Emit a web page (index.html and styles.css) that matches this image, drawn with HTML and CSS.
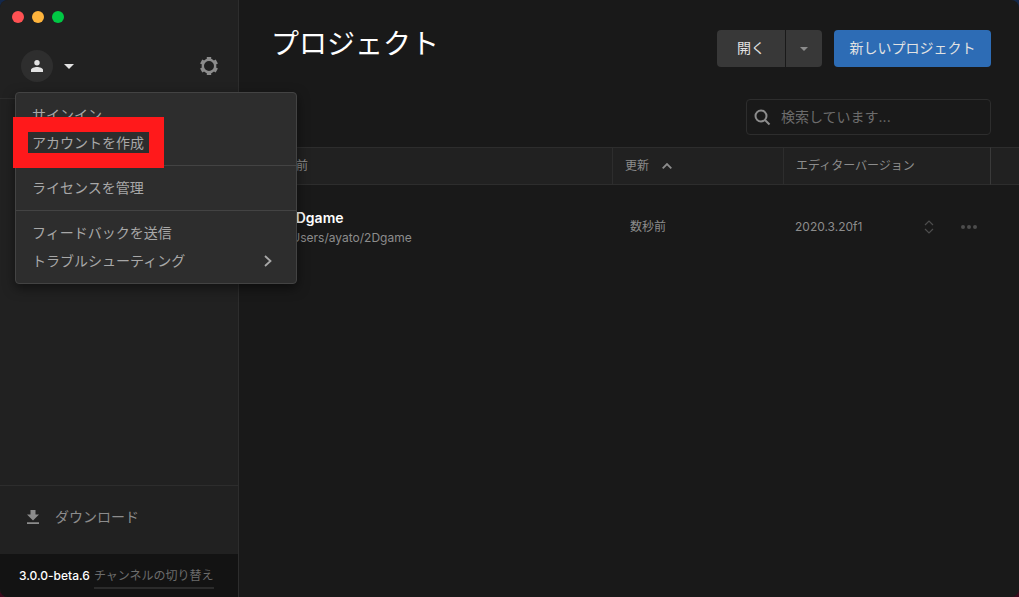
FILE: index.html
```html
<!DOCTYPE html>
<html lang="ja">
<head>
<meta charset="utf-8">
<meta name="viewport" content="width=device-width, initial-scale=1">
<title>プロジェクト</title>
<link rel="stylesheet" href="styles.css">
</head>
<body>
<div class="window">
  <aside class="sidebar">
    <div class="traffic">
      <button class="light red" aria-label="閉じる"></button>
      <button class="light yellow" aria-label="しまう"></button>
      <button class="light green" aria-label="拡大"></button>
    </div>
    <div class="account">
      <button class="user" aria-label="アカウント">
        <span class="avatar">
          <svg width="12" height="12" viewBox="0 0 12 12" fill="currentColor"><circle cx="6" cy="2.7" r="2.7"/><path d="M0 12V10C0 8 3.5 7 6 7s6 1 6 3v2z"/></svg>
        </span>
        <svg width="10" height="5" viewBox="0 0 10 5" fill="currentColor"><path d="M0 0h10L5 5z"/></svg>
      </button>
      <button class="settings" aria-label="設定">
        <svg width="18" height="18" viewBox="0 0 18 18" fill="none" stroke="currentColor"><circle cx="9" cy="9" r="6.200" stroke-width="2.400"/><path stroke-width="4.400" d="M9 0v2.500M9 15.500V18M1.200 4.500l2.200 1.250M14.600 12.250l2.200 1.250M1.200 13.500l2.200-1.250M14.600 5.750l2.200-1.250"/></svg>
      </button>
      <div class="menu" role="menu">
        <div class="group">
          <button class="item" role="menuitem">サインイン</button>
          <div class="marked"><button class="item" role="menuitem">アカウントを作成</button></div>
        </div>
        <div class="group">
          <button class="item" role="menuitem">ライセンスを管理</button>
        </div>
        <div class="group">
          <button class="item" role="menuitem">フィードバックを送信</button>
          <button class="item" role="menuitem">トラブルシューティング
            <svg width="8" height="12" viewBox="0 0 8 12" fill="none" stroke="currentColor" stroke-width="1.800"><path d="M1 1l5.500 5L1 11"/></svg>
          </button>
        </div>
      </div>
    </div>
    <div class="spacer"></div>
    <button class="downloads">
      <svg width="12" height="14" viewBox="0 0 12 14" fill="currentColor"><path d="M3.500 0h5v4.500H12L6 10.500 0 4.500h3.500zM0 12.300h12V14H0z"/></svg>
      ダウンロード
    </button>
    <footer class="version">
      <strong>3.0.0-beta.6</strong>
      <a href="#channel">チャンネルの切り替え</a>
    </footer>
  </aside>
  <main class="main">
    <header class="top">
      <h1>プロジェクト</h1>
      <div class="actions">
        <div class="split">
          <button class="open">開く</button>
          <button class="more" aria-label="開くオプション"><svg width="8" height="4" viewBox="0 0 8 4" fill="currentColor"><path d="M0 0h8L4 4z"/></svg></button>
        </div>
        <button class="create">新しいプロジェクト</button>
      </div>
    </header>
    <div class="search-row">
      <label class="search">
        <svg width="17" height="17" viewBox="0 0 17 17" fill="none" stroke="currentColor" stroke-width="2"><circle cx="7" cy="7" r="5.500"/><path d="M11 11l4.500 4.500"/></svg>
        <input type="text" placeholder="検索しています..." aria-label="検索">
      </label>
    </div>
    <table class="projects">
      <colgroup><col><col class="col-updated"><col class="col-version"><col class="col-end"></colgroup>
      <thead>
        <tr>
          <th class="name">名前</th>
          <th><span class="sort">更新<svg width="10" height="6" viewBox="0 0 10 6" fill="none" stroke="currentColor" stroke-width="1.800"><path d="M.7 5.300L5 1l4.300 4.300"/></svg></span></th>
          <th>エディターバージョン</th>
          <th class="end"></th>
        </tr>
      </thead>
      <tbody>
        <tr>
          <td class="name"><div class="title">2Dgame</div><div class="path">/Users/ayato/2Dgame</div></td>
          <td class="updated">数秒前</td>
          <td colspan="2" class="editor">
            <div class="editor-row">
              <span>2020.3.20f1</span>
              <button aria-label="バージョンを選択"><svg width="10" height="14" viewBox="0 0 10 14" fill="none" stroke="currentColor" stroke-width="1.200"><path d="M1 5l4-4 4 4M1 9l4 4 4-4"/></svg></button>
              <button aria-label="その他"><svg width="16" height="4" viewBox="0 0 16 4" fill="currentColor"><circle cx="2" cy="2" r="2"/><circle cx="8" cy="2" r="2"/><circle cx="14" cy="2" r="2"/></svg></button>
            </div>
          </td>
        </tr>
      </tbody>
    </table>
  </main>
</div>
</body>
</html>
```
FILE: styles.css
```css
*, *::before, *::after { box-sizing: border-box; }
body {
  margin: 0;
  background: linear-gradient(#14284a, #3a0a1c);
  color: #a8a8a8;
  font-family: Inter, "Noto Sans CJK JP", sans-serif;
  font-size: 14px;
  line-height: 20px;
}
button {
  margin: 0;
  padding: 0;
  border: 0;
  background: none;
  color: inherit;
  font: inherit;
}
svg { display: block; flex: none; }

.window {
  display: flex;
  min-height: 100vh;
  border-radius: 8px;
  background: #191919;
  overflow: hidden;
}

.sidebar {
  display: flex;
  flex-direction: column;
  flex: 0 0 239px;
  border-right: 1px solid #2d2d2d;
  background: #212121;
}
.traffic { display: flex; gap: 8px; padding: 11px 12px 0; }
.light { width: 12px; height: 12px; border-radius: 50%; }
.red { background: #ff5153; }
.yellow { background: #ffb43c; }
.green { background: #00c844; }

.account {
  position: relative;
  display: flex;
  align-items: center;
  justify-content: space-between;
  padding: 27px 20px 16px 21px;
  border-bottom: 1px solid #2d2d2d;
}
.user { display: flex; align-items: center; gap: 11px; color: #e2e2e2; }
.avatar {
  display: grid;
  place-items: center;
  width: 32px;
  height: 32px;
  border-radius: 50%;
  background: #2e2e2e;
}
.settings { color: #8c8c8c; }

.menu {
  position: absolute;
  z-index: 2;
  top: 69px;
  left: 15px;
  width: 282px;
  border: 1px solid #434343;
  border-radius: 4px;
  background: #2d2d2d;
  box-shadow: 0 4px 12px rgba(0, 0, 0, .5);
}
.group { padding: 8px 0; }
.group + .group { border-top: 1px solid #434343; }
.item {
  display: flex;
  align-items: center;
  justify-content: space-between;
  width: 100%;
  padding: 4px 24px 4px 16px;
  text-align: left;
}
.marked { position: relative; }
.marked::after {
  content: "";
  position: absolute;
  top: -12px;
  left: -3px;
  width: 151px;
  height: 51px;
  border: 15px solid #ff191b;
}

.spacer { flex: 1; }
.downloads {
  display: flex;
  align-items: center;
  gap: 16px;
  padding: 21px 27px 27px;
  border-top: 1px solid #2d2d2d;
  color: #8c8c8c;
}
.version {
  display: flex;
  align-items: flex-start;
  gap: 4px;
  padding: 10px 0 8px 19px;
  background: #131313;
  font-size: 12px;
  line-height: 24px;
  white-space: nowrap;
}
.version strong { color: #fff; font-weight: 500; }
.version a {
  border-bottom: 2px solid #2b2b2b;
  color: #6c6c6c;
  line-height: 23px;
  text-decoration: none;
}

.main { flex: 1; min-width: 0; }
.top {
  display: flex;
  justify-content: space-between;
  padding: 22px 28px 0 32px;
}
h1 {
  margin: 0;
  color: #fff;
  font-size: 28px;
  font-weight: 400;
  line-height: 44px;
}
.actions { display: flex; gap: 12px; padding-top: 8px; color: #e2e2e2; }
.actions button { height: 37px; padding-bottom: 2px; }
.split { display: flex; gap: 1px; }
.open { width: 68px; border-radius: 4px 0 0 4px; background: #383838; }
.actions .more {
  display: grid;
  place-items: center;
  width: 36px;
  padding: 0;
  border-radius: 0 4px 4px 0;
  background: #383838;
  color: #8c8c8c;
}
.create { width: 157px; border-radius: 4px; background: #2d6cb5; }

.search-row { display: flex; justify-content: flex-end; padding: 32px 28px 12px; }
.search {
  display: flex;
  align-items: center;
  gap: 10px;
  width: 245px;
  height: 36px;
  padding: 0 7px;
  border: 1px solid #2d2d2d;
  border-radius: 4px;
  color: #8c8c8c;
}
.search input {
  flex: 1;
  min-width: 0;
  padding: 0;
  border: 0;
  outline: 0;
  background: none;
  color: #e2e2e2;
  font: inherit;
}
.search input::placeholder { color: #6c6c6c; opacity: 1; }

.projects {
  width: 100%;
  border-collapse: separate;
  border-spacing: 0;
  table-layout: fixed;
  font-size: 12px;
}
.col-updated { width: 171px; }
.col-version { width: 207px; }
.col-end { width: 29px; }
th {
  height: 38px;
  padding: 0 12px;
  border: solid #2d2d2d;
  border-width: 1px 0 1px 1px;
  background: #212121;
  color: #8c8c8c;
  font-weight: 400;
  text-align: left;
}
th.name { padding-left: 45px; border-left: 0; }
th.end { border-left-color: #3a3a3a; }
.sort { display: flex; align-items: center; gap: 13px; }
td { height: 84px; padding: 0; }
td.name { padding: 2px 0 0 48px; }
.title { color: #fff; font-size: 14px; font-weight: 600; }
.path { color: #8c8c8c; }
td.updated { padding-left: 18px; color: #8c8c8c; }
td.editor { padding: 0 42px 0 12px; color: #8c8c8c; }
.editor-row { display: flex; align-items: center; }
.editor-row span { flex: 1; }
.editor-row button { margin-left: 27px; color: #4c4c4c; }
```
